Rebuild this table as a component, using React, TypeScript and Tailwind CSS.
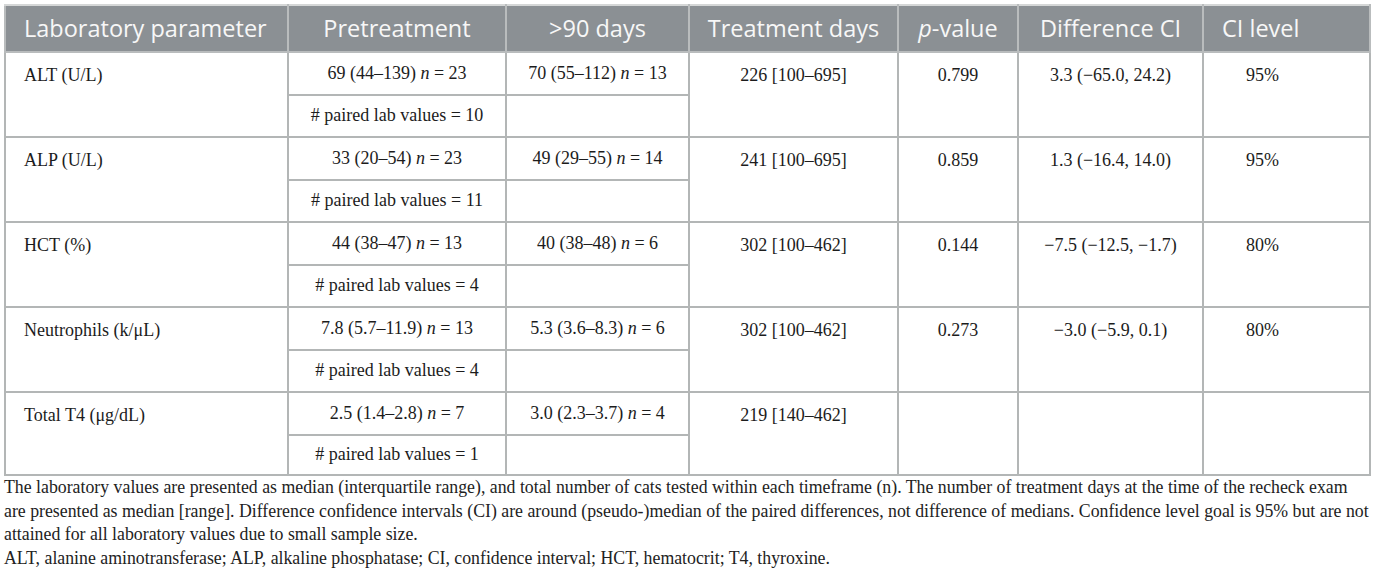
import React from "react";

type Row = {
  param: string;
  pre: React.ReactNode;
  paired: string;
  post: React.ReactNode;
  days: string;
  p: string;
  diff: string;
  level: string;
};

const N = ({ v }: { v: string }) => (
  <>
    {" "}
    <i>n</i> = {v}
  </>
);

const rows: Row[] = [
  {
    param: "ALT (U/L)",
    pre: <>69 (44–139)<N v="23" /></>,
    paired: "# paired lab values = 10",
    post: <>70 (55–112)<N v="13" /></>,
    days: "226 [100–695]",
    p: "0.799",
    diff: "3.3 (−65.0, 24.2)",
    level: "95%",
  },
  {
    param: "ALP (U/L)",
    pre: <>33 (20–54)<N v="23" /></>,
    paired: "# paired lab values = 11",
    post: <>49 (29–55)<N v="14" /></>,
    days: "241 [100–695]",
    p: "0.859",
    diff: "1.3 (−16.4, 14.0)",
    level: "95%",
  },
  {
    param: "HCT (%)",
    pre: <>44 (38–47)<N v="13" /></>,
    paired: "# paired lab values = 4",
    post: <>40 (38–48)<N v="6" /></>,
    days: "302 [100–462]",
    p: "0.144",
    diff: "−7.5 (−12.5, −1.7)",
    level: "80%",
  },
  {
    param: "Neutrophils (k/μL)",
    pre: <>7.8 (5.7–11.9)<N v="13" /></>,
    paired: "# paired lab values = 4",
    post: <>5.3 (3.6–8.3)<N v="6" /></>,
    days: "302 [100–462]",
    p: "0.273",
    diff: "−3.0 (−5.9, 0.1)",
    level: "80%",
  },
  {
    param: "Total T4 (μg/dL)",
    pre: <>2.5 (1.4–2.8)<N v="7" /></>,
    paired: "# paired lab values = 1",
    post: <>3.0 (2.3–3.7)<N v="4" /></>,
    days: "219 [140–462]",
    p: "",
    diff: "",
    level: "",
  },
];

const cell = "border-2 border-[#b3b6b6] align-top";
const top = "pt-[10px] leading-[24px]";
const th = "border-2 border-[#b9bcbd] border-t-[#d5d7d7] font-normal";

export default function App() {
  return (
    <div className="bg-white w-[1375px] h-[582px] overflow-hidden pl-[4px] pt-[4px] text-[#1c1c1c] [font-family:'Liberation_Serif','Times_New_Roman',serif]">
      <table className="w-[1365px] table-fixed border-collapse text-[18px]">
        <colgroup>
          <col className="w-[283px]" />
          <col className="w-[218px]" />
          <col className="w-[183px]" />
          <col className="w-[209px]" />
          <col className="w-[120px]" />
          <col className="w-[185px]" />
          <col className="w-[167px]" />
        </colgroup>
        <thead>
          <tr className="h-[47px] bg-[#8b9094] text-[#f7f7f7] [font-family:'Open_Sans',sans-serif] text-[23.5px]">
            <th className={`${th} text-left pl-[18px]`}>Laboratory parameter</th>
            <th className={th}>Pretreatment</th>
            <th className={th}>&gt;90 days</th>
            <th className={th}>Treatment days</th>
            <th className={th}>
              <i>p</i>-value
            </th>
            <th className={th}>Difference CI</th>
            <th className={`${th} text-left pl-[18px]`}>CI level</th>
          </tr>
        </thead>
        <tbody>
          {rows.map((r, i) => (
            <React.Fragment key={r.param}>
              <tr className="h-[42.5px]">
                <td rowSpan={2} className={`${cell} ${top} pl-[18px]`}>
                  {r.param}
                </td>
                <td className="border-2 border-[#b3b6b6] text-center">{r.pre}</td>
                <td className="border-2 border-[#b3b6b6] text-center">{r.post}</td>
                <td rowSpan={2} className={`${cell} ${top} text-center`}>
                  {r.days}
                </td>
                <td rowSpan={2} className={`${cell} ${top} text-center`}>
                  {r.p}
                </td>
                <td rowSpan={2} className={`${cell} ${top} text-center`}>
                  {r.diff}
                </td>
                <td rowSpan={2} className={`${cell} ${top} pl-[42px]`}>
                  {r.level}
                </td>
              </tr>
              <tr className={i === rows.length - 1 ? "h-[40.5px]" : "h-[42.5px]"}>
                <td className="border-2 border-[#b3b6b6] text-center">{r.paired}</td>
                <td className="border-2 border-[#b3b6b6]"></td>
              </tr>
            </React.Fragment>
          ))}
        </tbody>
      </table>
      <div className="w-[1371px] text-[17.8px] leading-[23.5px] text-[#222] whitespace-nowrap">
        <p>
          The laboratory values are presented as median (interquartile range), and total number of cats
          tested within each timeframe (n). The number of treatment days at the time of the recheck exam
          <br />
          are presented as median [range]. Difference confidence intervals (CI) are around
          (pseudo-)median of the paired differences, not difference of medians. Confidence level goal is
          95% but are not
          <br />
          attained for all laboratory values due to small sample size.
        </p>
        <p>
          ALT, alanine aminotransferase; ALP, alkaline phosphatase; CI, confidence interval; HCT,
          hematocrit; T4, thyroxine.
        </p>
      </div>
    </div>
  );
}
